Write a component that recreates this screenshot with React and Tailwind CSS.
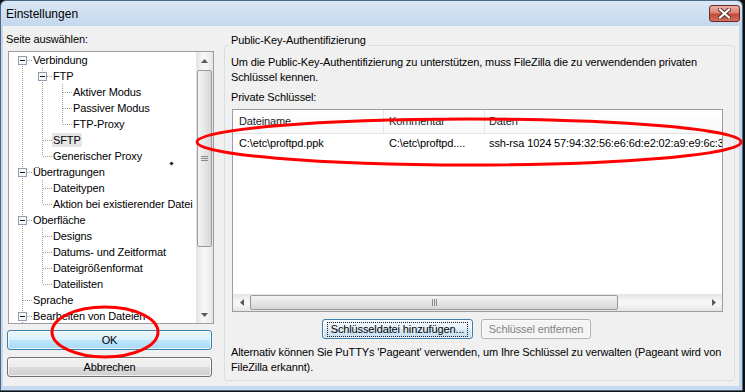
import React from "react";

const tree = [
  { label: "Verbindung", level: 0, open: true },
  { label: "FTP", level: 1, open: true },
  { label: "Aktiver Modus", level: 2 },
  { label: "Passiver Modus", level: 2 },
  { label: "FTP-Proxy", level: 2 },
  { label: "SFTP", level: 1, selected: true },
  { label: "Generischer Proxy", level: 1 },
  { label: "Übertragungen", level: 0, open: true },
  { label: "Dateitypen", level: 1 },
  { label: "Aktion bei existierender Datei", level: 1 },
  { label: "Oberfläche", level: 0, open: true },
  { label: "Designs", level: 1 },
  { label: "Datums- und Zeitformat", level: 1 },
  { label: "Dateigrößenformat", level: 1 },
  { label: "Dateilisten", level: 1 },
  { label: "Sprache", level: 0 },
  { label: "Bearbeiten von Dateien", level: 0, open: true },
  { label: "Dateitypzuordnungen", level: 1 },
  { label: "Aktualisierungen", level: 0 },
  { label: "Protokollierung", level: 0 },
];

// true if a later sibling exists at the same level before the branch closes
const hasNext = (i, lvl) => {
  for (let j = i + 1; j < tree.length; j++) {
    if (tree[j].level < lvl) return false;
    if (tree[j].level === lvl) return true;
  }
  return false;
};

const ancestorOf = (i, lvl) => {
  for (let j = i - 1; j >= 0; j--) if (tree[j].level === lvl) return j;
  return -1;
};

const DOT = "#a0a0a0";

function Cell({ top, bottom, branch, box }) {
  return (
    <svg width="20" height="16" className="shrink-0" shapeRendering="crispEdges">
      {top && <line x1="10.5" y1="0" x2="10.5" y2="8" stroke={DOT} strokeDasharray="1 1" />}
      {bottom && <line x1="10.5" y1="8" x2="10.5" y2="16" stroke={DOT} strokeDasharray="1 1" />}
      {branch && <line x1="11" y1="8.5" x2="20" y2="8.5" stroke={DOT} strokeDasharray="1 1" />}
      {box && (
        <>
          <rect x="6.5" y="4.5" width="8" height="8" fill="#f7f7f7" stroke="#8e9bb0" />
          <line x1="8" y1="8.5" x2="13" y2="8.5" stroke="#1a1a1a" />
        </>
      )}
    </svg>
  );
}

function TreeRow({ item, i }) {
  const cells = [];
  for (let a = 0; a < item.level; a++) {
    const anc = ancestorOf(i, a);
    const line = hasNext(anc, a);
    cells.push(<Cell key={a} top={line} bottom={line} />);
  }
  cells.push(
    <Cell
      key="own"
      top={i !== 0}
      bottom={hasNext(i, item.level)}
      branch
      box={item.open}
    />
  );
  return (
    <div className="flex h-4 items-center pl-[3px]">
      {cells}
      <span
        className={`whitespace-nowrap px-[1px] leading-[14px] ${
          item.selected ? "bg-[#e6e6e6]" : ""
        }`}
      >
        {item.label}
      </span>
    </div>
  );
}

function Arrow({ dir }) {
  const pts = {
    up: "0,4 3.5,0 7,4",
    down: "0,0 3.5,4 7,0",
    left: "4,0 0,3.5 4,7",
    right: "0,0 4,3.5 0,7",
  }[dir];
  const vert = dir === "up" || dir === "down";
  return (
    <svg width={vert ? 7 : 4} height={vert ? 4 : 7}>
      <polygon points={pts} fill="#5a5a5a" />
    </svg>
  );
}

function Grip({ vertical }) {
  return vertical ? (
    <div className="flex flex-col gap-[1px]">
      <div className="h-[1px] w-[7px] bg-[#8a8a8a]" />
      <div className="h-[1px] w-[7px] bg-[#8a8a8a]" />
      <div className="h-[1px] w-[7px] bg-[#8a8a8a]" />
    </div>
  ) : (
    <div className="flex gap-[1px]">
      <div className="h-[7px] w-[1px] bg-[#8a8a8a]" />
      <div className="h-[7px] w-[1px] bg-[#8a8a8a]" />
      <div className="h-[7px] w-[1px] bg-[#8a8a8a]" />
    </div>
  );
}

function Button({ children, kind = "normal", focus, className = "" }) {
  const styles = {
    normal:
      "border-[#707070] bg-[linear-gradient(#f2f2f2_0%,#ebebeb_50%,#dddddd_50%,#cfcfcf_100%)] text-black",
    default:
      "border-[#3c7fb1] bg-[linear-gradient(#eaf6fd_0%,#d9f0fc_50%,#bee6fd_50%,#a7d9f5_100%)] text-black",
    focus:
      "border-[#3c7fb1] bg-[linear-gradient(#f4f9fd_0%,#e8f2fa_50%,#d8e8f5_50%,#c9dff0_100%)] text-black",
    disabled: "border-[#adb2b5] bg-[#f4f4f4] text-[#838383]",
  }[kind];
  return (
    <div
      className={`flex items-center justify-center rounded-[3px] border shadow-[inset_0_0_0_1px_rgba(255,255,255,0.7)] ${styles} ${className}`}
    >
      {focus ? (
        <span className="border border-dotted border-[#202020] px-[3px] leading-[13px]">
          {children}
        </span>
      ) : (
        <span className="leading-[14px]">{children}</span>
      )}
    </div>
  );
}

export default function App() {
  return (
    <div className="h-[392px] w-[745px] overflow-hidden bg-[#111] font-['Liberation_Sans',Arial,sans-serif] text-[11px] tracking-[-0.12px] text-black">
      <div className="relative flex h-[391px] w-[743px] flex-col rounded-t-[6px] border border-[#4b6784] bg-[linear-gradient(#dae7f5,#c3d7ed_26px,#c6d9ee)] pb-[4px] pl-[2px] pr-[3px]">
        {/* title bar */}
        <div className="flex h-[25px] shrink-0 items-start justify-between pl-[3px] pt-[4px]">
          <span className="mt-[1px] text-[12px] leading-[16px] tracking-normal">Einstellungen</span>
          <div className="mr-[-1px] flex h-[17px] w-[31px] items-center justify-center rounded-[3px] border border-[#6e2a22] bg-[linear-gradient(#eab2a5_0%,#d98373_45%,#c24a35_55%,#d2725e_100%)]">
            <svg width="13" height="11" viewBox="0 0 13 11">
              <path d="M2 1.5 L11 9.5 M11 1.5 L2 9.5" stroke="#5a2a22" strokeWidth="4" strokeLinecap="square" />
              <path d="M2 1.5 L11 9.5 M11 1.5 L2 9.5" stroke="#ffffff" strokeWidth="2.2" strokeLinecap="square" />
            </svg>
          </div>
        </div>

        {/* body */}
        <div className="flex flex-1 bg-[#f0f0f0] pl-[5px]">
          {/* left column */}
          <div className="flex w-[206px] flex-col pt-[6px]">
            <div className="-ml-[2px] leading-[15px]">Seite auswählen:</div>
            <div className="relative mt-[4px] flex h-[273px] border border-[#9a9ea4] bg-white">
              <div className="flex-1 overflow-hidden">
                {tree.map((item, i) => (
                  <TreeRow key={i} item={item} i={i} />
                ))}
              </div>
              <div className="flex w-[17px] flex-col bg-[linear-gradient(to_right,#e4e4e4,#f6f6f6_40%,#f6f6f6_60%,#e4e4e4)]">
                <div className="flex h-[17px] items-center justify-center">
                  <Arrow dir="up" />
                </div>
                <div className="flex-1">
                  <div className="mx-[1px] mt-[1px] flex h-[177px] items-center justify-center rounded-[2px] border border-[#9a9a9a] bg-[linear-gradient(to_right,#f4f4f4,#e6e6e6_50%,#d6d6d6)]">
                    <Grip vertical />
                  </div>
                </div>
                <div className="flex h-[17px] items-center justify-center">
                  <Arrow dir="down" />
                </div>
              </div>
              <div className="absolute left-[161px] top-[110px] h-[3px] w-[3px] rotate-45 bg-[#222]" />
            </div>
            <Button kind="default" className="-ml-[1px] mt-[6px] h-[20px] w-[205px]">
              OK
            </Button>
            <Button className="-ml-[1px] mt-[7px] h-[20px] w-[205px]">Abbrechen</Button>
          </div>

          {/* right group box */}
          <div className="relative ml-[10px] mt-[19px] h-[336px] w-[511px] rounded-[3px] border border-[#d5dfe5] pl-[6px] pt-[9px]">
            <span className="absolute -top-[13px] left-[4px] bg-[#f0f0f0] px-[2px] leading-[15px]">
              Public-Key-Authentifizierung
            </span>
            <p className="leading-[15px]">
              Um die Public-Key-Authentifizierung zu unterstützen, muss FileZilla die zu verwendenden privaten
              <br />
              Schlüssel kennen.
            </p>
            <div className="mt-[5px] leading-[15px]">Private Schlüssel:</div>
            <div className="ml-[1px] mt-[4px] flex h-[203px] w-[491px] flex-col border border-[#9a9ea4] bg-white">
              <div className="flex h-[24px] shrink-0 border-b border-[#e5e5e5] bg-[linear-gradient(#ffffff,#f7f8fa)] text-[#1c1c1c]">
                <div className="flex w-[151px] items-center border-r border-[#e3e8ee] pl-[6px]">Dateiname</div>
                <div className="flex w-[101px] items-center border-r border-[#e3e8ee] pl-[5px]">Kommentar</div>
                <div className="flex flex-1 items-center pl-[4px]">Daten</div>
              </div>
              <div className="flex h-[18px] shrink-0 items-center whitespace-nowrap">
                <div className="w-[151px] pl-[6px]">C:\etc\proftpd.ppk</div>
                <div className="w-[101px] pl-[5px]">C:\etc\proftpd....</div>
                <div className="flex-1 overflow-hidden pl-[4px]">
                  ssh-rsa 1024 57:94:32:56:e6:6d:e2:02:a9:e9:6c:3f:1b:8a
                </div>
              </div>
              <div className="flex-1" />
              <div className="flex h-[17px] shrink-0 bg-[linear-gradient(#e4e4e4,#f6f6f6_40%,#f6f6f6_60%,#e4e4e4)]">
                <div className="flex w-[17px] items-center justify-center">
                  <Arrow dir="left" />
                </div>
                <div className="flex-1">
                  <div className="my-[1px] flex h-[15px] w-[368px] items-center justify-center rounded-[2px] border border-[#9a9a9a] bg-[linear-gradient(#f4f4f4,#e6e6e6_50%,#d6d6d6)]">
                    <Grip />
                  </div>
                </div>
                <div className="flex w-[17px] items-center justify-center">
                  <Arrow dir="right" />
                </div>
              </div>
            </div>
            <div className="mt-[7px] flex gap-[8px] pl-[91px]">
              <Button kind="focus" focus className="h-[20px] w-[151px]">
                Schlüsseldatei hinzufügen...
              </Button>
              <Button kind="disabled" className="h-[20px] w-[110px]">
                Schlüssel entfernen
              </Button>
            </div>
            <p className="mt-[6px] leading-[15px]">
              Alternativ können Sie PuTTYs 'Pageant' verwenden, um Ihre Schlüssel zu verwalten (Pageant wird von
              <br />
              FileZilla erkannt).
            </p>
          </div>
        </div>

        {/* red annotation marks drawn on the screenshot */}
        <svg className="pointer-events-none absolute -left-[1px] -top-[1px]" width="745" height="392">
          <ellipse cx="469" cy="142" rx="272" ry="23" fill="none" stroke="#ff0000" strokeWidth="3" />
          <ellipse cx="105" cy="332" rx="53" ry="25" fill="none" stroke="#ff0000" strokeWidth="3" />
        </svg>
      </div>
    </div>
  );
}
